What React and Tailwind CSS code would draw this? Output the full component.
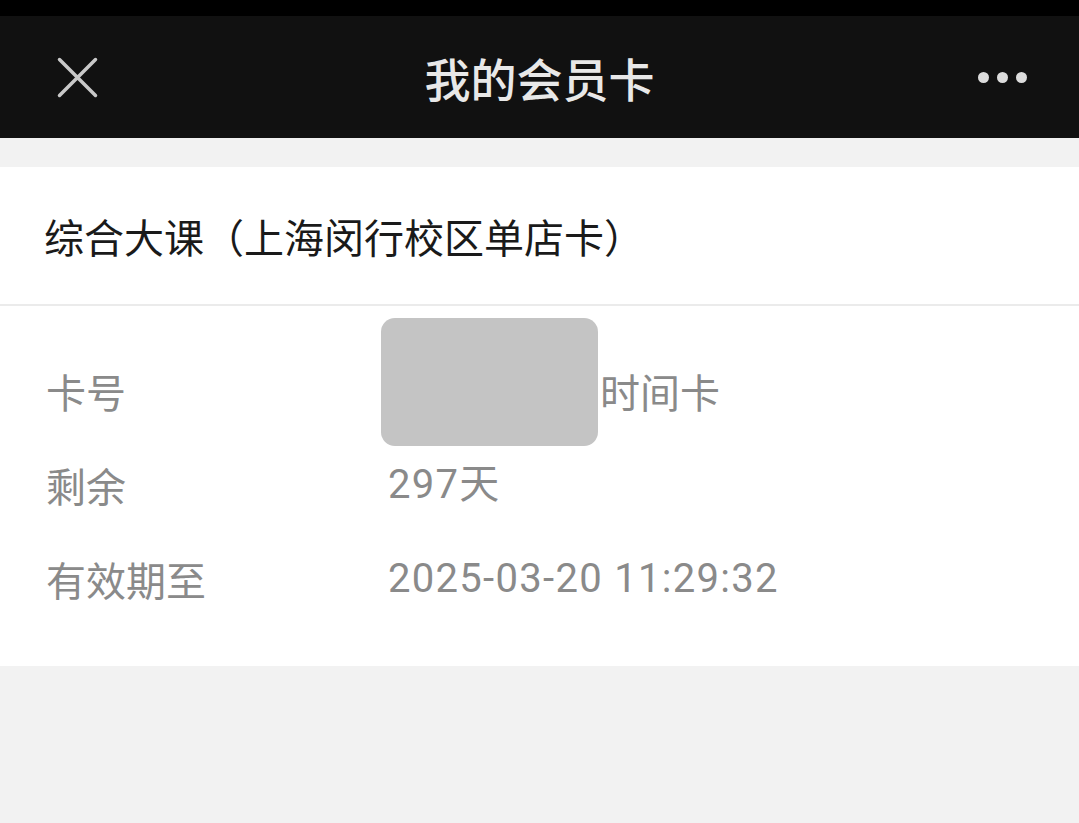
export default function App() {
  const rows = [
    { label: '卡号', value: '时间卡', masked: true },
    { label: '剩余', value: '297天' },
    { label: '有效期至', value: '2025-03-20 11:29:32' },
  ];

  return (
    <div
      className="w-[1079px] h-[823px] bg-[#f2f2f2] overflow-hidden"
      style={{ fontFamily: '"Noto Sans CJK SC", "Noto Sans", sans-serif' }}
    >
      {/* status bar strip */}
      <div className="h-[16px] bg-black" />

      {/* nav bar */}
      <div className="h-[122px] bg-[#111111] flex items-center justify-between px-[57px] relative">
        <svg width="41" height="41" viewBox="0 0 41 41" className="shrink-0">
          <path d="M2.5 2.5 L38.5 38.5 M38.5 2.5 L2.5 38.5" stroke="#c9c9c9" strokeWidth="3.5" strokeLinecap="round" />
        </svg>
        <div className="absolute left-0 right-0 text-center text-[46px] text-[#e8e8e8] font-medium leading-none pointer-events-none">
          我的会员卡
        </div>
        <div className="flex gap-[8px] mr-[-5px]">
          <span className="w-[11px] h-[11px] rounded-full bg-[#dcdcdc]" />
          <span className="w-[11px] h-[11px] rounded-full bg-[#dcdcdc]" />
          <span className="w-[11px] h-[11px] rounded-full bg-[#dcdcdc]" />
        </div>
      </div>

      <div className="h-[29px]" />

      {/* card */}
      <div className="bg-white">
        <div className="h-[139px] flex items-center px-[44px] border-b-2 border-[#ebebeb]">
          <span className="text-[40px] text-[#1a1a1a] leading-none">综合大课（上海闵行校区单店卡）</span>
        </div>
        <div className="pt-[38px] pb-[40px] px-[46px]">
          {rows.map((r) => (
            <div key={r.label} className="h-[94px] flex items-center text-[40px] text-[#8a8a8a] leading-none">
              <span className="w-[342px] shrink-0">{r.label}</span>
              {r.masked ? (
                <span className="flex items-center">
                  <span className="relative w-[212px] h-[40px] inline-block">
                    <span className="absolute left-[-7px] top-[-53px] w-[217px] h-[128px] rounded-[14px] bg-[#c4c4c4]" />
                  </span>
                  <span>{r.value}</span>
                </span>
              ) : (
                <span className="tracking-[1.3px]" style={{ fontFamily: 'Roboto, "Noto Sans CJK SC", sans-serif' }}>
                  {r.value}
                </span>
              )}
            </div>
          ))}
        </div>
      </div>
    </div>
  );
}
